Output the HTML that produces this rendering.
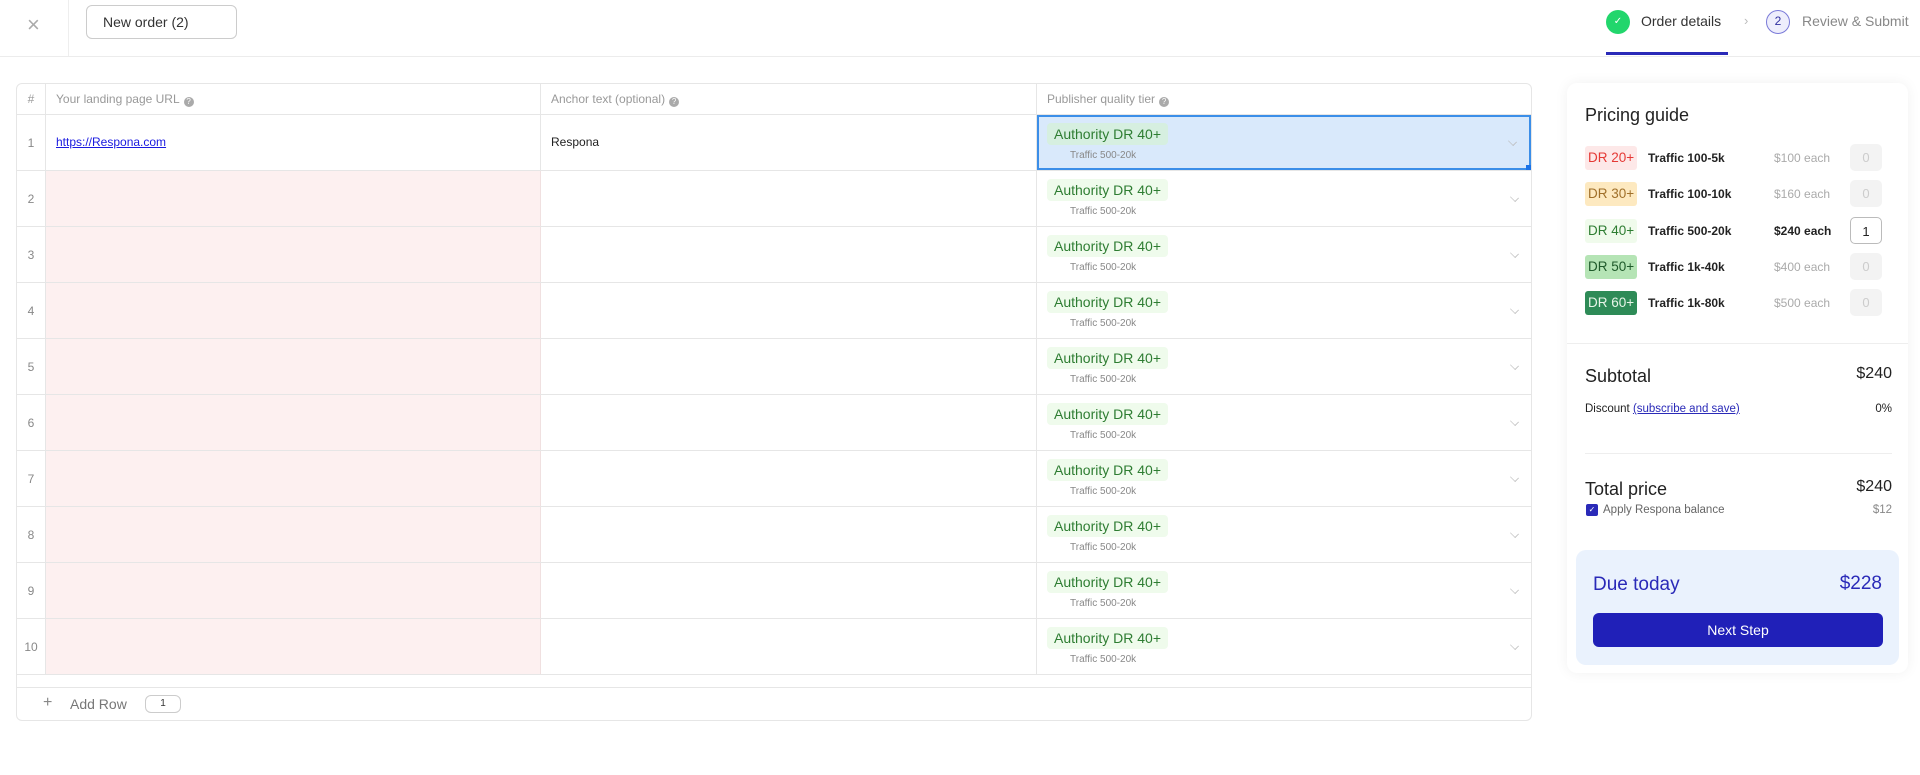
<!DOCTYPE html>
<html><head><meta charset="utf-8"><style>
*{box-sizing:border-box;margin:0;padding:0}
body{width:1920px;height:775px;background:#fff;font-family:"Liberation Sans",sans-serif;position:relative;overflow:hidden;color:#222}
.a{position:absolute}
.hdr{left:0;top:0;width:1920px;height:57px;border-bottom:1px solid #ececec}
.tbl{left:16px;top:83px;width:1516px;height:638px;border:1px solid #e6e6e6;border-radius:6px;overflow:hidden}
.hc{font-size:12px;color:#999;top:0;height:31px;line-height:31px;border-bottom:1px solid #e6e6e6}
.q{display:inline-block;width:10px;height:10px;border-radius:50%;background:#aaa;color:#fff;font-size:8px;line-height:10px;text-align:center;vertical-align:-1px;margin-left:4px}
.row{left:0;width:1516px;height:56px;border-bottom:1px solid #e6e6e6}
.num{left:0;width:29px;height:100%;text-align:center;font-size:12px;color:#888;border-right:1px solid #e6e6e6;line-height:56px}
.url{left:29px;width:495px;height:100%;background:#fdf0f0;border-right:1px solid #f0e0e0}
.anc{left:524px;width:496px;height:100%;border-right:1px solid #e6e6e6}
.tier{left:1020px;width:496px;height:100%}
.badge{left:10px;top:8px;height:22px;line-height:22px;padding:0 7px;background:#effbec;color:#2e7d32;font-size:14px;border-radius:4px}
.sub{left:33px;top:35px;font-size:10px;color:#888}
.chev{right:14px;top:22px;width:9px;height:9px;border-right:1px solid #bbb;border-bottom:1px solid #bbb;transform:rotate(45deg) scale(.8,.6)}
.panel{left:1567px;top:83px;width:341px;height:590px;border-radius:10px;box-shadow:0 0 14px rgba(0,0,0,.06);background:#fff}
.pr{left:18px;height:24px;width:305px;font-size:12px}
.db{left:0;top:0;height:24px;line-height:24px;padding:0 3px;border-radius:3px;font-size:13.5px}
.tr{left:63px;top:0;line-height:24px;font-weight:bold;color:#222}
.pc{left:189px;top:0;line-height:24px;color:#aaa}
.cnt{left:265px;top:-2px;width:32px;height:27px;border-radius:5px;background:#f3f3f3;color:#ccc;text-align:center;line-height:27px;font-size:13px}
</style></head><body>
<div class="a hdr">
 <div class="a" style="left:27px;top:14px;font-size:22px;color:#aaa;line-height:22px">×</div>
 <div class="a" style="left:68px;top:0;width:1px;height:56px;background:#eee"></div>
 <div class="a" style="left:86px;top:5px;width:151px;height:34px;border:1px solid #ccc;border-radius:6px;font-size:14px;line-height:32px;padding-left:16px;color:#333">New order (2)</div>
 <div class="a" style="left:1606px;top:10px;width:24px;height:24px;border-radius:50%;background:#22d66c;color:#fff;font-size:10px;text-align:center;line-height:24px">✓</div>
 <div class="a" style="left:1641px;top:13px;font-size:14px;color:#333">Order details</div>
 <div class="a" style="left:1606px;top:52px;width:122px;height:3px;background:#2a2ab8"></div>
 <div class="a" style="left:1744px;top:13px;font-size:13px;color:#bbb">›</div>
 <div class="a" style="left:1766px;top:10px;width:24px;height:24px;border-radius:50%;border:1.5px solid #7a7ad8;background:#eeeefc;color:#3030a0;font-size:12px;text-align:center;line-height:21px">2</div>
 <div class="a" style="left:1802px;top:13px;font-size:14px;color:#888">Review &amp; Submit</div>
</div>

<div class="a tbl">
 <div class="a hc" style="left:0;width:29px;text-align:center;border-right:1px solid #e6e6e6">#</div>
 <div class="a hc" style="left:29px;width:495px;padding-left:10px;border-right:1px solid #e6e6e6">Your landing page URL<span class="q">?</span></div>
 <div class="a hc" style="left:524px;width:496px;padding-left:10px;border-right:1px solid #e6e6e6">Anchor text (optional)<span class="q">?</span></div>
 <div class="a hc" style="left:1020px;width:496px;padding-left:10px">Publisher quality tier<span class="q">?</span></div>

 <div class="a row" style="top:31px"><div class="a num">1</div><div class="a url" style="background:#fff;border-right-color:#e6e6e6"><span class="a" style="left:10px;top:20px;font-size:12px;color:#1a1ae0;text-decoration:underline">https://Respona.com</span></div><div class="a anc"><span class="a" style="left:10px;top:20px;font-size:12px;color:#222">Respona</span></div><div class="a tier" style="background:#d9e9fb;border:2px solid #3b8ee8;width:494px"><div class="a badge" style="left:8px;top:6px;background:#d6efe0">Authority DR 40+</div><div class="a sub" style="left:31px;top:33px">Traffic 500-20k</div><div class="a chev" style="right:12px;top:20px"></div><div class="a" style="right:-2px;bottom:-2px;width:5px;height:5px;background:#1a73e8"></div></div></div>
 <div class="a row" style="top:87px"><div class="a num">2</div><div class="a url"></div><div class="a anc"></div><div class="a tier"><div class="a badge">Authority DR 40+</div><div class="a sub">Traffic 500-20k</div><div class="a chev"></div></div></div>
 <div class="a row" style="top:143px"><div class="a num">3</div><div class="a url"></div><div class="a anc"></div><div class="a tier"><div class="a badge">Authority DR 40+</div><div class="a sub">Traffic 500-20k</div><div class="a chev"></div></div></div>
 <div class="a row" style="top:199px"><div class="a num">4</div><div class="a url"></div><div class="a anc"></div><div class="a tier"><div class="a badge">Authority DR 40+</div><div class="a sub">Traffic 500-20k</div><div class="a chev"></div></div></div>
 <div class="a row" style="top:255px"><div class="a num">5</div><div class="a url"></div><div class="a anc"></div><div class="a tier"><div class="a badge">Authority DR 40+</div><div class="a sub">Traffic 500-20k</div><div class="a chev"></div></div></div>
 <div class="a row" style="top:311px"><div class="a num">6</div><div class="a url"></div><div class="a anc"></div><div class="a tier"><div class="a badge">Authority DR 40+</div><div class="a sub">Traffic 500-20k</div><div class="a chev"></div></div></div>
 <div class="a row" style="top:367px"><div class="a num">7</div><div class="a url"></div><div class="a anc"></div><div class="a tier"><div class="a badge">Authority DR 40+</div><div class="a sub">Traffic 500-20k</div><div class="a chev"></div></div></div>
 <div class="a row" style="top:423px"><div class="a num">8</div><div class="a url"></div><div class="a anc"></div><div class="a tier"><div class="a badge">Authority DR 40+</div><div class="a sub">Traffic 500-20k</div><div class="a chev"></div></div></div>
 <div class="a row" style="top:479px"><div class="a num">9</div><div class="a url"></div><div class="a anc"></div><div class="a tier"><div class="a badge">Authority DR 40+</div><div class="a sub">Traffic 500-20k</div><div class="a chev"></div></div></div>
 <div class="a row" style="top:535px"><div class="a num">10</div><div class="a url"></div><div class="a anc"></div><div class="a tier"><div class="a badge">Authority DR 40+</div><div class="a sub">Traffic 500-20k</div><div class="a chev"></div></div></div>
 <div class="a" style="left:0;top:603px;width:1516px;height:1px;background:#e6e6e6"></div>
 <div class="a" style="left:26px;top:610px;font-size:16px;color:#888">+</div>
 <div class="a" style="left:53px;top:612px;font-size:14px;color:#777">Add Row</div>
 <div class="a" style="left:128px;top:611px;width:36px;height:18px;border:1px solid #ccc;border-radius:6px;font-size:10px;text-align:center;line-height:16px;color:#333">1</div>
</div>

<div class="a panel">
 <div class="a" style="left:18px;top:22px;font-size:18px;color:#222">Pricing guide</div>
 <div class="a pr" style="top:63px"><div class="a db" style="background:#fde8e8;color:#e53935">DR 20+</div><div class="a tr">Traffic 100-5k</div><div class="a pc">$100 each</div><div class="a cnt">0</div></div>
 <div class="a pr" style="top:99px"><div class="a db" style="background:#fde9c0;color:#a0702a">DR 30+</div><div class="a tr">Traffic 100-10k</div><div class="a pc">$160 each</div><div class="a cnt">0</div></div>
 <div class="a pr" style="top:136px"><div class="a db" style="background:#f0fbec;color:#2e7d32">DR 40+</div><div class="a tr">Traffic 500-20k</div><div class="a pc" style="color:#222;font-weight:bold">$240 each</div><div class="a cnt" style="background:#fff;border:1px solid #bbb;color:#222">1</div></div>
 <div class="a pr" style="top:172px"><div class="a db" style="background:#b5e4b5;color:#1f5a2a">DR 50+</div><div class="a tr">Traffic 1k-40k</div><div class="a pc">$400 each</div><div class="a cnt">0</div></div>
 <div class="a pr" style="top:208px"><div class="a db" style="background:#2e8b57;color:#e8f5e8">DR 60+</div><div class="a tr">Traffic 1k-80k</div><div class="a pc">$500 each</div><div class="a cnt">0</div></div>
 <div class="a" style="left:0;top:260px;width:341px;height:1px;background:#eee"></div>
 <div class="a" style="left:18px;top:283px;font-size:18px">Subtotal</div>
 <div class="a" style="right:16px;top:282px;font-size:16px">$240</div>
 <div class="a" style="left:18px;top:320px;font-size:11.5px">Discount <span style="color:#2a2ab8;text-decoration:underline">(subscribe and save)</span></div>
 <div class="a" style="right:16px;top:320px;font-size:11.5px">0%</div>
 <div class="a" style="left:18px;top:370px;width:307px;height:1px;background:#eee"></div>
 <div class="a" style="left:18px;top:396px;font-size:18px">Total price</div>
 <div class="a" style="right:16px;top:395px;font-size:16px">$240</div>
 <div class="a" style="left:19px;top:421px;width:12px;height:12px;border-radius:2px;background:#2a2ab8;color:#fff;font-size:8px;text-align:center;line-height:12px">✓</div>
 <div class="a" style="left:36px;top:421px;font-size:11.5px;color:#666">Apply Respona balance</div>
 <div class="a" style="right:16px;top:421px;font-size:11.5px;color:#888">$12</div>
 <div class="a" style="left:9px;top:467px;width:323px;height:115px;border-radius:10px;background:#eaf2fd">
  <div class="a" style="left:17px;top:24px;font-size:19px;color:#2a2ab8">Due today</div>
  <div class="a" style="right:17px;top:23px;font-size:19px;color:#2a2ab8">$228</div>
  <div class="a" style="left:17px;top:63px;width:290px;height:34px;border-radius:6px;background:#2020b8;color:#fff;font-size:14px;text-align:center;line-height:34px">Next Step</div>
 </div>
</div>
</body></html>
